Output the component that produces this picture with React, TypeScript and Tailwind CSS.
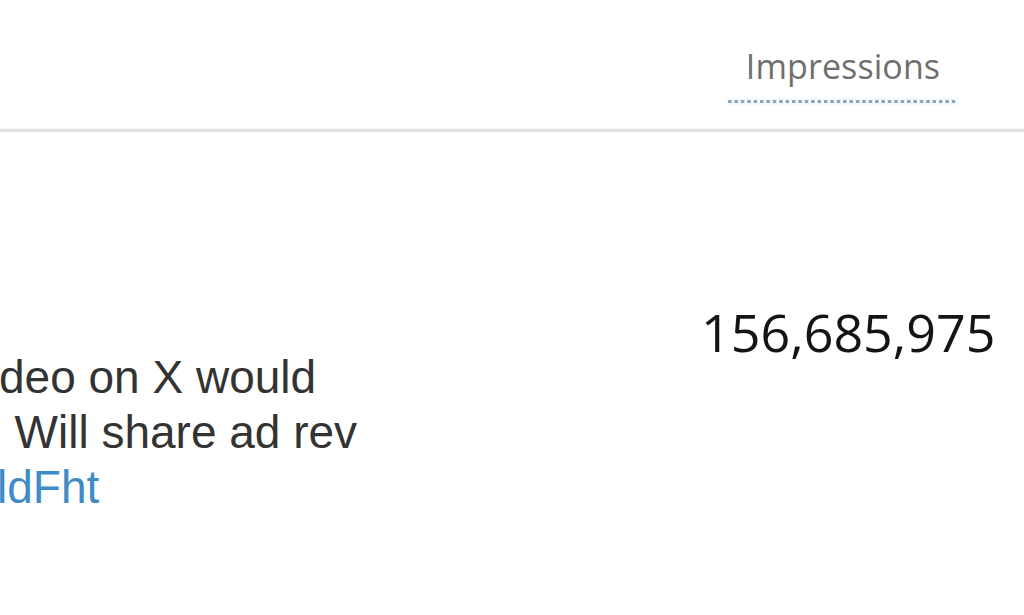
import React from "react";

function Header() {
  return (
    <div className="h-[129px] flex justify-end pr-[66px]">
      <div className="w-[230px] flex flex-col items-center pt-[49px]">
        <p className="font-['Open_Sans',sans-serif] text-[34px] leading-[34px] text-[#6f6f6f] tracking-[0.1px]">
          Impressions
        </p>
        <div className="mt-[17px] h-[3px] w-[230px] bg-[linear-gradient(to_right,#8ea7b8_62%,transparent_62%)] bg-[length:6.4px_3px] shadow-[0_0_4px_#d3e9f6]" />
      </div>
    </div>
  );
}

function TweetText() {
  return (
    <div className="w-[701px] overflow-hidden pt-[218px] font-['Liberation_Sans',Arial,sans-serif] text-[46px] leading-[55px] text-[#333333] whitespace-nowrap">
      <div className="ml-[-1px]">deo on X would</div>
      <div className="ml-[-11px]">. Will share ad rev</div>
      <div className="ml-[-3px] text-[#3f8bc6]">ldFht</div>
    </div>
  );
}

export default function App() {
  return (
    <div className="w-[1024px] h-[615px] bg-white overflow-hidden">
      <Header />
      <div className="h-[3px] bg-[#dfe1e5] shadow-[0_0_2px_#e6e8eb]" />
      <div className="flex">
        <TweetText />
        <div className="pt-[174px]">
          <p className="font-['Open_Sans',sans-serif] text-[52px] leading-[52px] text-[#141414]">156,685,975</p>
        </div>
      </div>
    </div>
  );
}
